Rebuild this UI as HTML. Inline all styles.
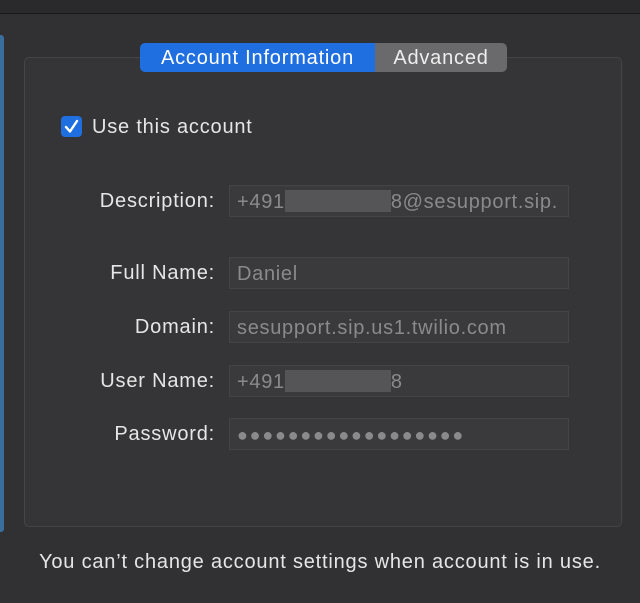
<!DOCTYPE html>
<html><head><style>
body{margin:0;width:640px;height:603px;background:#313133;font-family:"Liberation Sans",sans-serif;position:relative;overflow:hidden}
.top{position:absolute;left:0;top:0;width:640px;height:13px;background:#2a2a2c;border-bottom:1px solid #1a1a1a}
.strip{position:absolute;left:0;top:35px;width:4px;height:497px;background:#3a6e9c;border-radius:0 3px 3px 0}
.panel{position:absolute;left:24px;top:57px;width:596px;height:468px;background:#353537;border:1px solid #454547;border-radius:5px}
.seg{position:absolute;top:43px;left:140px;height:29px;display:flex;border-radius:5px;overflow:hidden;font-size:20px;color:#fff;letter-spacing:0.8px}
.seg div{line-height:30px;text-align:center}
.a{background:#1f6fe0;width:235px}
.b{background:#6a6a6c;width:132px;color:#eee}
.cb{position:absolute;left:61px;top:116px;width:21px;height:21px;background:#1f6fe0;border-radius:4px}
.lbl{position:absolute;right:425px;font-size:20px;letter-spacing:0.8px;color:#e6e6e6}
.fld{position:absolute;left:229px;width:340px;height:32px;background:#3a3a3c;border:1px solid #444446;box-sizing:border-box;font-size:20px;letter-spacing:0.7px;color:#8a8a8c;padding-left:7px;line-height:33px;white-space:nowrap;overflow:hidden}
.blur{display:inline-block;width:106px;height:22px;background:#555557;vertical-align:-4px}
.msg{position:absolute;left:0;width:640px;top:551px;text-align:center;font-size:20px;letter-spacing:0.8px;color:#e6e6e6}
</style></head><body>
<div class="top"></div><div class="strip"></div>
<div class="panel"></div>
<div class="seg"><div class="a">Account Information</div><div class="b">Advanced</div></div>
<div class="cb"><svg width="21" height="21"><path d="M5 11 L9 15.5 L16 5" stroke="#fff" stroke-width="2.4" fill="none" stroke-linecap="round" stroke-linejoin="round"/></svg></div>
<div style="position:absolute;left:92px;top:116px;font-size:20px;letter-spacing:0.8px;color:#e6e6e6">Use this account</div>
<div class="lbl" style="top:190px">Description:</div>
<div class="fld" style="top:185px">+491<span class="blur"></span>8@sesupport.sip.</div>
<div class="lbl" style="top:262px">Full Name:</div>
<div class="fld" style="top:257px">Daniel</div>
<div class="lbl" style="top:316px">Domain:</div>
<div class="fld" style="top:311px">sesupport.sip.us1.twilio.com</div>
<div class="lbl" style="top:370px">User Name:</div>
<div class="fld" style="top:365px">+491<span class="blur"></span>8</div>
<div class="lbl" style="top:423px">Password:</div>
<div class="fld" style="top:418px;font-size:18px;letter-spacing:1.8px">●●●●●●●●●●●●●●●●●●</div>
<div class="msg">You can’t change account settings when account is in use.</div>
</body></html>
